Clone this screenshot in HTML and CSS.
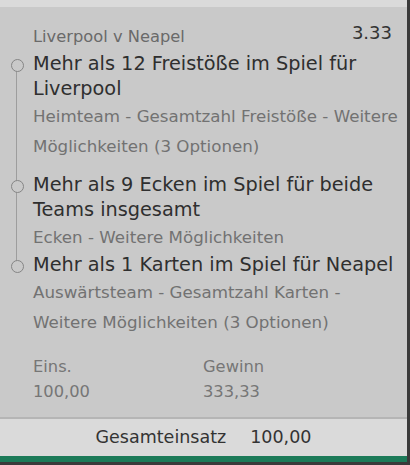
FILE: index.html
```html
<!DOCTYPE html>
<html lang="de">
<head>
<meta charset="utf-8">
<title>Wettschein</title>
<link rel="stylesheet" href="styles.css">
</head>
<body>
<div class="slip">
  <div class="topbar"></div>
  <div class="card">
    <div class="event">
      <span class="match">Liverpool v Neapel</span>
      <span class="odds">3.33</span>
    </div>
    <div class="legs">
      <div class="leg spaced">
        <div class="title">Mehr als 12 Freistöße im Spiel für Liverpool</div>
        <div class="market">Heimteam - Gesamtzahl Freistöße - Weitere Möglichkeiten (3 Optionen)</div>
      </div>
      <div class="leg">
        <div class="title">Mehr als 9 Ecken im Spiel für beide Teams insgesamt</div>
        <div class="market">Ecken - Weitere Möglichkeiten</div>
      </div>
      <div class="leg">
        <div class="title">Mehr als 1 Karten im Spiel für Neapel</div>
        <div class="market">Auswärtsteam - Gesamtzahl Karten - Weitere Möglichkeiten (3 Optionen)</div>
      </div>
    </div>
    <div class="stakes">
      <span class="label">Eins.</span>
      <span class="label">Gewinn</span>
      <span class="value">100,00</span>
      <span class="value">333,33</span>
    </div>
  </div>
  <div class="footer">
    <span>Gesamteinsatz</span>
    <span>100,00</span>
  </div>
  <div class="accent"></div>
</div>
</body>
</html>
```
FILE: styles.css
```css
* { box-sizing: border-box; }

html, body {
  margin: 0;
  padding: 0;
}

body {
  background: #3a3a3a;
  font-family: "DejaVu Sans", Verdana, sans-serif;
  width: 410px;
  height: 465px;
  overflow: hidden;
}

.slip {
  width: 407px;
  display: flex;
  flex-direction: column;
}

.topbar {
  height: 7px;
  background: #dadada;
}

.card {
  background: #c9c9c9;
  padding: 20px 4px 13px 33px;
  border-bottom: 2px solid #b5b5b5;
}

.event {
  display: flex;
  justify-content: space-between;
  align-items: flex-start;
  margin-bottom: 4px;
}

.match {
  font-size: 16.3px;
  line-height: 20px;
  color: #6a6a6a;
}

.odds {
  font-size: 18px;
  line-height: 12px;
  color: #333;
  margin-right: 11px;
}

.leg {
  position: relative;
}

.leg.spaced {
  padding-bottom: 11px;
}

.leg::before {
  content: "";
  position: absolute;
  left: -22px;
  top: 8px;
  width: 11px;
  height: 11px;
  border: 1.6px solid #858585;
  border-radius: 50%;
  background: #c9c9c9;
  z-index: 2;
}

.leg:not(:last-child)::after {
  content: "";
  position: absolute;
  left: -17px;
  top: 13px;
  bottom: -13px;
  width: 1.3px;
  background: #9d9d9d;
  z-index: 1;
}

.title {
  font-size: 19.3px;
  line-height: 25px;
  color: #2f2f2f;
}

.market {
  font-size: 16.7px;
  line-height: 30px;
  color: #727272;
}

.stakes {
  display: grid;
  grid-template-columns: 170px 1fr;
  margin-top: 17px;
  font-size: 16.3px;
  line-height: 25px;
  color: #767676;
}

.footer {
  height: 37px;
  background: #dadada;
  display: flex;
  justify-content: center;
  gap: 24px;
  font-size: 17.5px;
  line-height: 37px;
  color: #333;
}

.accent {
  height: 6px;
  background: #1c7a58;
}
```
